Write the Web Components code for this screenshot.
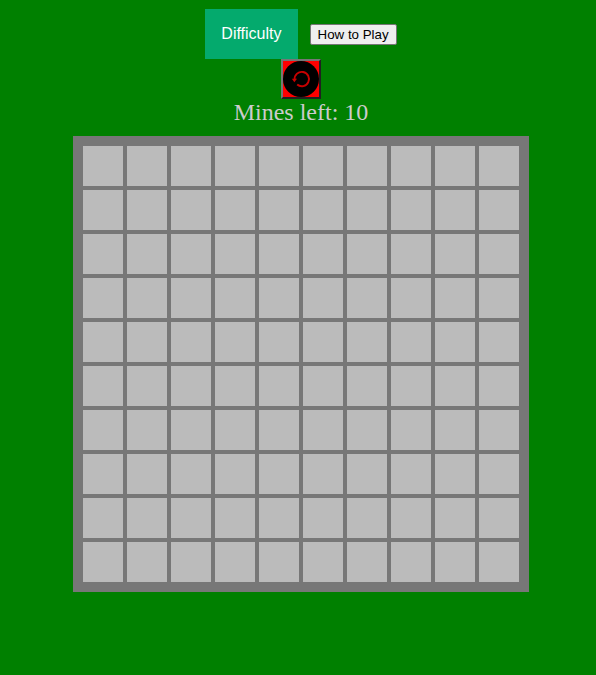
<!DOCTYPE html>
<html lang="en">
<head>
<meta charset="utf-8">
<meta name="viewport" content="width=device-width, initial-scale=1">
<title>Minesweeper</title>
<style>
  html { background: #008000; }
  body { margin: 0; font-family: "Liberation Serif", "Times New Roman", serif; }
</style>
</head>
<body>
<mine-game>
  <game-toolbar slot="toolbar">
    <menu-button>Difficulty</menu-button>
    <help-button>How to Play</help-button>
  </game-toolbar>
  <restart-button slot="restart"></restart-button>
  <mine-counter slot="counter" count="10">Mines left:</mine-counter>
  <mine-board slot="board" rows="10" columns="10"></mine-board>
</mine-game>

<script>
  class MineGame extends HTMLElement {
    constructor() {
      super();
      this.attachShadow({ mode: "open" }).innerHTML = `
        <style>
          :host { display: block; }
          main {
            display: flex;
            flex-direction: column;
            align-items: center;
            padding: 9px 0 9px 6px;
          }
        </style>
        <main>
          <slot name="toolbar"></slot>
          <slot name="restart"></slot>
          <slot name="counter"></slot>
          <slot name="board"></slot>
        </main>`;
    }
  }

  class GameToolbar extends HTMLElement {
    constructor() {
      super();
      this.attachShadow({ mode: "open" }).innerHTML = `
        <style>
          :host { display: flex; align-items: center; gap: 12px; }
        </style>
        <slot></slot>`;
    }
  }

  class MenuButton extends HTMLElement {
    constructor() {
      super();
      this.attachShadow({ mode: "open" }).innerHTML = `
        <style>
          :host { display: block; }
          button {
            display: block;
            padding: 16px;
            border: 0;
            background: #04aa6d;
            color: #fff;
            font: 16px/18px "Liberation Sans", Arial, sans-serif;
            cursor: pointer;
          }
        </style>
        <button type="button" aria-haspopup="menu"><slot></slot></button>`;
    }
  }

  class HelpButton extends HTMLElement {
    constructor() {
      super();
      this.attachShadow({ mode: "open" }).innerHTML = `
        <style>
          :host { display: block; }
          button {
            display: block;
            padding: 2px 7px;
            border: 1px solid #767676;
            border-radius: 2px;
            background: #efefef;
            color: #000;
            font-family: "Liberation Sans", Arial, sans-serif;
            line-height: 15px;
          }
        </style>
        <button type="button"><slot></slot></button>`;
    }
  }

  class RestartButton extends HTMLElement {
    constructor() {
      super();
      this.attachShadow({ mode: "open" }).innerHTML = `
        <style>
          :host { display: block; }
          button {
            display: block;
            box-sizing: border-box;
            width: 40px;
            height: 40px;
            padding: 0;
            border: 2px solid;
            border-color: #767676 #212121 #212121 #767676;
            background: #f00;
          }
          svg { display: block; width: 100%; height: 100%; }
        </style>
        <button type="button" aria-label="Restart">
          <svg viewBox="0 0 36 36" aria-hidden="true">
            <circle cx="18" cy="18" r="18" fill="#000"/>
            <path d="M11.6 18.5 A7.2 7.2 0 1 1 14.2 23.6" fill="none" stroke="#c80000" stroke-width="1.9"/>
            <path d="M8.8 17.8 L14 17.8 L11.4 21.2 Z" fill="#c80000"/>
          </svg>
        </button>`;
    }
  }

  class MineCounter extends HTMLElement {
    constructor() {
      super();
      this.attachShadow({ mode: "open" }).innerHTML = `
        <style>
          :host { display: block; color: #ccc; font-size: 24px; line-height: 27px; }
        </style>
        <slot></slot> <span></span>`;
    }
    connectedCallback() {
      this.shadowRoot.querySelector("span").textContent = this.getAttribute("count");
    }
  }

  class MineCell extends HTMLElement {
    constructor() {
      super();
      this.attachShadow({ mode: "open" }).innerHTML = `
        <style>
          :host { display: block; }
          button {
            display: block;
            width: 100%;
            aspect-ratio: 1;
            padding: 0;
            border: 0;
            background: #bbb;
          }
        </style>
        <button type="button"></button>`;
    }
    connectedCallback() {
      this.shadowRoot.querySelector("button").setAttribute("aria-label", this.getAttribute("label"));
    }
  }

  class MineBoard extends HTMLElement {
    constructor() {
      super();
      this.attachShadow({ mode: "open" }).innerHTML = `
        <style>
          :host {
            display: grid;
            grid-template-columns: repeat(var(--columns), minmax(0, 40px));
            gap: 4px;
            margin-top: 10px;
            padding: 10px;
            background: #777;
          }
        </style>`;
    }
    connectedCallback() {
      const rows = Number(this.getAttribute("rows"));
      const columns = Number(this.getAttribute("columns"));
      this.style.setProperty("--columns", columns);
      for (let r = 1; r <= rows; r++) {
        for (let c = 1; c <= columns; c++) {
          const cell = document.createElement("mine-cell");
          cell.setAttribute("label", `Row ${r}, column ${c}`);
          this.shadowRoot.append(cell);
        }
      }
    }
  }

  customElements.define("mine-cell", MineCell);
  customElements.define("mine-board", MineBoard);
  customElements.define("mine-counter", MineCounter);
  customElements.define("restart-button", RestartButton);
  customElements.define("help-button", HelpButton);
  customElements.define("menu-button", MenuButton);
  customElements.define("game-toolbar", GameToolbar);
  customElements.define("mine-game", MineGame);
</script>
</body>
</html>
